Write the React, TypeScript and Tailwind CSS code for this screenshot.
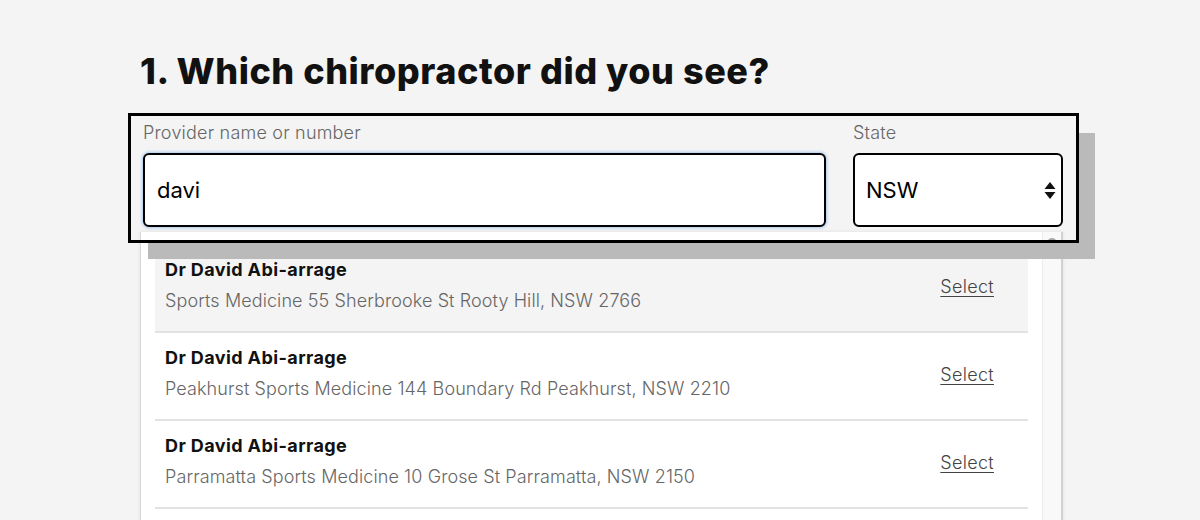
import { useState } from 'react'

const results = [
  { name: 'Dr David Abi-arrage', address: 'Sports Medicine 55 Sherbrooke St Rooty Hill, NSW 2766' },
  { name: 'Dr David Abi-arrage', address: 'Peakhurst Sports Medicine 144 Boundary Rd Peakhurst, NSW 2210' },
  { name: 'Dr David Abi-arrage', address: 'Parramatta Sports Medicine 10 Grose St Parramatta, NSW 2150' },
]

export default function App() {
  const [query, setQuery] = useState('davi')
  const [state, setState] = useState('NSW')
  const [active, setActive] = useState(0)

  return (
    <div className="h-[520px] overflow-hidden bg-[#f4f4f4] font-['Inter',sans-serif] text-[#111]">
      <div className="ml-[140px] w-[923px] pt-[49px]">
        <h1 className="text-[36px] font-extrabold leading-[44px] tracking-[0.55px]">
          1. Which chiropractor did you see?
        </h1>

        {/* focused field group */}
        <div className="relative z-10 -ml-[12px] mt-[20px] w-[951px] border-[3px] border-black px-[12px] pb-[13px] pt-[6px] shadow-[18px_18px_0_-2px_#bababa]">
          <div className="flex gap-[27px]">
            <label className="flex w-[683px] flex-col">
              <span className="text-[18px] font-light leading-[22px] tracking-[0.2px] text-[#666]">
                Provider name or number
              </span>
              <input
                value={query}
                onChange={e => setQuery(e.target.value)}
                className="mt-[9px] h-[74px] rounded-[6px] border-2 border-black bg-white px-[12px] text-[22px] text-black shadow-[0_0_3px_1px_#a8c6ee] outline-none"
              />
            </label>
            <label className="flex w-[210px] flex-col">
              <span className="text-[18px] font-light leading-[22px] tracking-[0.2px] text-[#666]">State</span>
              <div className="relative mt-[9px]">
                <select
                  value={state}
                  onChange={e => setState(e.target.value)}
                  className="h-[74px] w-full appearance-none rounded-[6px] border-2 border-black bg-white px-[11px] text-[22px] text-black outline-none"
                >
                  {['ACT', 'NSW', 'NT', 'QLD', 'SA', 'TAS', 'VIC', 'WA'].map(s => (
                    <option key={s}>{s}</option>
                  ))}
                </select>
                <svg
                  className="pointer-events-none absolute right-[7px] top-[27px]"
                  width="12"
                  height="20"
                  viewBox="0 0 12 20"
                >
                  <path d="M6 2 L11.5 9 H0.5 Z" fill="#111" />
                  <path d="M0.5 12 H11.5 L6 19 Z" fill="#111" />
                </svg>
              </div>
            </label>
          </div>
        </div>

        {/* results dropdown */}
        <div className="-mt-[11px] flex h-[300px] border-l border-[#d8d8d8] bg-white shadow-[0_0_4px_rgba(0,0,0,0.08)]">
          <ul className="flex-1 px-[14px] pt-[13px]">
            {results.map((r, i) => (
              <li
                key={i}
                onMouseEnter={() => setActive(i)}
                className={`flex items-center border-b-2 border-[#e2e2e2] pb-[17px] pl-[10px] pr-[34px] pt-[14px] ${
                  active === i ? 'bg-[#f4f4f4]' : 'bg-white'
                }`}
              >
                <div className="flex-1">
                  <div className="text-[18px] font-bold leading-[22px] tracking-[0.4px] text-[#111]">{r.name}</div>
                  <div className="mt-[7px] text-[18px] font-light leading-[26px] tracking-[0.1px] text-[#666]">
                    {r.address}
                  </div>
                </div>
                <a
                  href="#"
                  className="text-[18px] font-light tracking-[0.3px] text-[#444] underline underline-offset-[3px]"
                >
                  Select
                </a>
              </li>
            ))}
          </ul>
          <div className="w-[21px] border-l border-r-2 border-[#ececec] border-r-[#d2d2d2] bg-[#f9f9f9] pt-[6px]">
            <div className="ml-[4px] h-[21px] w-[10px] rounded-full bg-[#a9a9a9]" />
          </div>
        </div>
      </div>
    </div>
  )
}
